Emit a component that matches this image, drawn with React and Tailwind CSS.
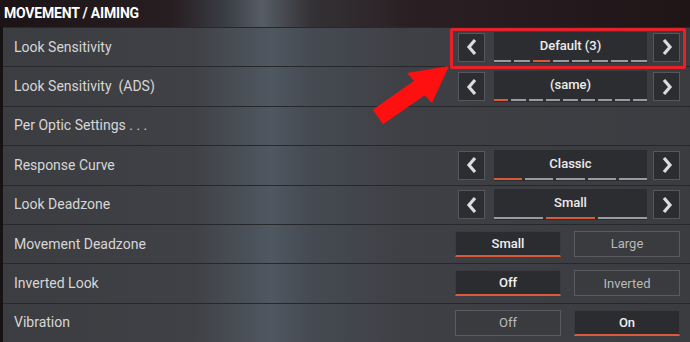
import React from 'react';

const Chevron = ({ dir }) => (
  <svg width="12" height="18" viewBox="0 0 12 18" className="text-[#dcdcdc]">
    {dir === 'left' ? (
      <path d="M9 2 L3 9 L9 16" fill="none" stroke="currentColor" strokeWidth="3.2" strokeLinejoin="miter" />
    ) : (
      <path d="M3 2 L9 9 L3 16" fill="none" stroke="currentColor" strokeWidth="3.2" strokeLinejoin="miter" />
    )}
  </svg>
);

const ArrowBox = ({ dir }) => (
  <div className="w-[27px] h-[29px] flex items-center justify-center bg-[#2c2d31] border border-[#55575b]">
    <Chevron dir={dir} />
  </div>
);

const Selector = ({ value, count, active }) => (
  <div className="flex items-center">
    <ArrowBox dir="left" />
    <div className="ml-[9px] mr-[6px] w-[153px] h-[31px] relative bg-[#2c2d31] flex items-center justify-center pb-[3px]">
      <span className="text-[13px] font-medium text-[#ececec]">{value}</span>
      <div className="absolute left-0 right-0 bottom-[1px] flex gap-[3px]">
        {Array.from({ length: count }).map((_, i) => (
          <div key={i} className={`flex-1 h-[2px] ${i === active ? 'bg-[#d85a3c]' : 'bg-[#9a9b9e]'}`} />
        ))}
      </div>
    </div>
    <ArrowBox dir="right" />
  </div>
);

const Toggle = ({ options, selected }) => (
  <div className="flex gap-[13px]">
    {options.map((opt, i) => (
      <div
        key={opt}
        className={`w-[106px] h-[26px] flex items-center justify-center text-[13px] ${
          i === selected
            ? 'bg-[#2b2c2f] border border-[#3a3b3e] border-b-2 border-b-[#d85a3c] text-[#f0f0f0] font-medium'
            : 'bg-[#3a3b3f] border border-[#5a5b5f] text-[#b9b9bb]'
        }`}
      >
        {opt}
      </div>
    ))}
  </div>
);

const rows = [
  { label: 'Look Sensitivity', control: <Selector value="Default (3)" count={8} active={2} /> },
  { label: 'Look Sensitivity  (ADS)', control: <Selector value="(same)" count={9} active={0} /> },
  { label: 'Per Optic Settings . . .' },
  { label: 'Response Curve', control: <Selector value="Classic" count={5} active={0} /> },
  { label: 'Look Deadzone', control: <Selector value="Small" count={3} active={1} /> },
  { label: 'Movement Deadzone', control: <Toggle options={['Small', 'Large']} selected={0} /> },
  { label: 'Inverted Look', control: <Toggle options={['Off', 'Inverted']} selected={0} /> },
  { label: 'Vibration', control: <Toggle options={['Off', 'On']} selected={1} /> },
];

export default function App() {
  return (
    <div
      className="relative w-[690px] h-[342px] overflow-hidden bg-[#161214]"
      style={{ fontFamily: 'Roboto, "Liberation Sans", sans-serif' }}
    >
      {/* Header */}
      <div className="h-[27px] pl-[4px] flex items-center bg-[linear-gradient(90deg,#1b1315_0%,#271e21_25%,#3b3f46_33%,#565d66_38%,#343236_45%,#2a1f23_60%,#1f1517_100%)]">
        <span className="text-[14px] font-bold text-white tracking-[-0.2px]">MOVEMENT / AIMING</span>
      </div>

      {/* Settings list */}
      <div className="ml-[3px] h-[315px] flex flex-col bg-[linear-gradient(90deg,#3c3d41_0%,#404146_28%,#4a5058_35%,#4f5760_39%,#454a52_45%,#3f4045_58%,#3b3c40_100%)]">
        {rows.map((row) => (
          <div
            key={row.label}
            className="flex-1 flex items-center justify-between pl-[11px] pr-[10px] border-t border-[#27282b]"
          >
            <span className="text-[14px] text-[#d6d6d6] whitespace-pre">{row.label}</span>
            {row.control}
          </div>
        ))}
      </div>

      {/* Red highlight */}
      <div className="absolute left-[450px] top-[28px] w-[236px] h-[41px] border-[3px] border-[#e3222a] rounded-[2px]" />

      {/* Red arrow */}
      <svg className="absolute left-0 top-0" width="690" height="342" viewBox="0 0 690 342">
        <polygon
          points="449,66 432,103 424.7,95.3 383,124.3 372.8,109.7 414.2,80.7 407,73"
          fill="#ff1010"
        />
      </svg>
    </div>
  );
}
